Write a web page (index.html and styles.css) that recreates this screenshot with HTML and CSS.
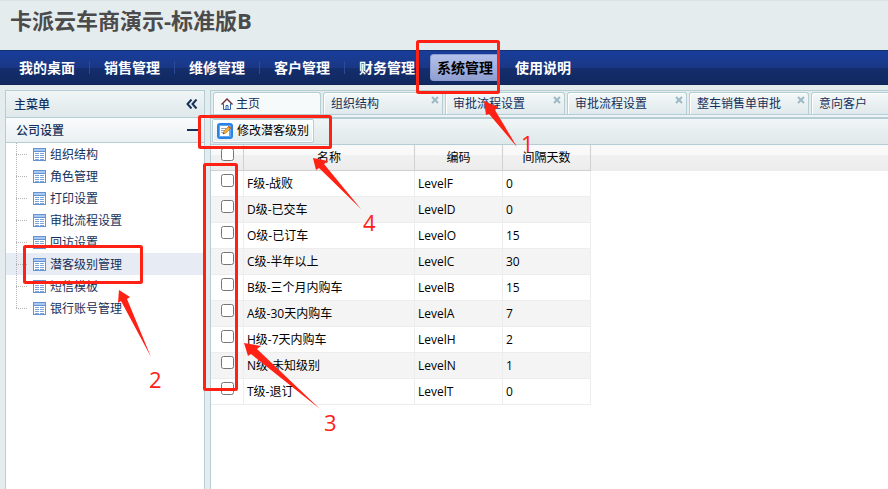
FILE: index.html
```html
<!DOCTYPE html>
<html lang="zh-CN">

<head>
    <meta charset="UTF-8">
    <meta name="viewport" content="width=device-width, initial-scale=1.0">
    <title>卡派云车商演示-标准版B</title>
    <link rel="stylesheet" href="styles.css">
</head>

<body>
    <!-- 公用图标 -->
    <svg class="defs" width="0" height="0" aria-hidden="true">
        <symbol id="icon-table" viewBox="0 0 13 13">
            <path d="M0 0h13v13H0z" fill="#6593cf" />
            <path d="M1 1h11v2H1z" fill="#a9c8f1" />
            <path d="M1 4h11v8H1z" fill="#fff" />
            <path d="M2 5.5h4M7 5.5h4M2 7.5h4M7 7.5h4M2 9.5h4M7 9.5h4M2 11.5h4M7 11.5h4" stroke="#7da4d8" />
        </symbol>
        <symbol id="icon-close" viewBox="0 0 8 8">
            <path d="M1 1l6 6M7 1l-6 6" stroke="#9dbac4" stroke-width="2" />
        </symbol>
    </svg>

    <header class="header">
        <h1>卡派云车商演示-标准版B</h1>
    </header>

    <nav class="nav">
        <a href="#">我的桌面</a>
        <i class="sep"></i>
        <a href="#">销售管理</a>
        <i class="sep"></i>
        <a href="#">维修管理</a>
        <i class="sep"></i>
        <a href="#">客户管理</a>
        <i class="sep"></i>
        <a href="#">财务管理</a>
        <a href="#" class="active">系统管理</a>
        <a href="#">使用说明</a>
    </nav>

    <div class="main">
        <aside class="side">
            <div class="side-title">
                <h2>主菜单</h2>
                <button type="button" class="fold" aria-label="收起">
                    <svg width="12" height="10" viewBox="0 0 12 10"><path d="M5.500 0.500L1.500 5l4 4.500M10.500 0.500L6.500 5l4 4.500" fill="none" stroke="#15305a" stroke-width="2" /></svg>
                </button>
            </div>
            <div class="side-group">
                <h3>公司设置</h3>
                <button type="button" class="fold" aria-label="折叠">
                    <svg width="12" height="10" viewBox="0 0 12 10"><path d="M1 5h11" stroke="#15305a" stroke-width="2" /></svg>
                </button>
            </div>
            <ul class="tree">
                <li><a href="#"><svg class="ico"><use href="#icon-table" /></svg>组织结构</a></li>
                <li><a href="#"><svg class="ico"><use href="#icon-table" /></svg>角色管理</a></li>
                <li><a href="#"><svg class="ico"><use href="#icon-table" /></svg>打印设置</a></li>
                <li><a href="#"><svg class="ico"><use href="#icon-table" /></svg>审批流程设置</a></li>
                <li><a href="#"><svg class="ico"><use href="#icon-table" /></svg>回访设置</a></li>
                <li class="on"><a href="#"><svg class="ico"><use href="#icon-table" /></svg>潜客级别管理</a></li>
                <li><a href="#"><svg class="ico"><use href="#icon-table" /></svg>短信模板</a></li>
                <li><a href="#"><svg class="ico"><use href="#icon-table" /></svg>银行账号管理</a></li>
            </ul>
        </aside>

        <section class="content">
            <div class="tabs">
                <div class="tab home">
                    <svg width="12" height="12" viewBox="0 0 12 12">
                        <path d="M2.500 5.500v6h7v-6" fill="#fff" stroke="#2c5fa8" />
                        <path d="M5 11.500v-4h2v4" fill="none" stroke="#2c5fa8" />
                        <path d="M0.500 6.500L6 1l5.500 5.500" fill="none" stroke="#6d2a35" stroke-width="1.400" />
                    </svg>
                    <a href="#">主页</a>
                </div>
                <div class="tab"><a href="#">组织结构</a><button type="button" aria-label="关闭"><svg><use href="#icon-close" /></svg></button></div>
                <div class="tab"><a href="#">审批流程设置</a><button type="button" aria-label="关闭"><svg><use href="#icon-close" /></svg></button></div>
                <div class="tab"><a href="#">审批流程设置</a><button type="button" aria-label="关闭"><svg><use href="#icon-close" /></svg></button></div>
                <div class="tab"><a href="#">整车销售单审批</a><button type="button" aria-label="关闭"><svg><use href="#icon-close" /></svg></button></div>
                <div class="tab"><a href="#">意向客户</a><button type="button" aria-label="关闭"><svg><use href="#icon-close" /></svg></button></div>
            </div>

            <div class="toolbar">
                <button type="button" class="edit">
                    <svg width="16" height="16" viewBox="0 0 16 16">
                        <rect x="1" y="1" width="14" height="14" rx="2" fill="#fff" stroke="#2b82e0" stroke-width="2" />
                        <path d="M2 2h12v12H2z" fill="#5aa7f3" />
                        <path d="M3 3h9v10H3z" fill="#fff" />
                        <path d="M4 5.500h5M4 7.500h4M4 9.500h2" stroke="#8fa6b8" />
                        <path d="M6 11l1-3 5-5 2 2-5 5z" fill="#f5ae38" stroke="#a86f1c" stroke-width="0.600" />
                        <path d="M11 4l1-1 2 2-1 1z" fill="#d8563a" />
                        <path d="M6 11l0.500-1.500 1 1z" fill="#333" />
                    </svg>
                    修改潜客级别
                </button>
            </div>

            <div class="grid">
                <table>
                    <thead>
                        <tr>
                            <th class="c-check"><input type="checkbox" aria-label="全选"></th>
                            <th class="c-name">名称</th>
                            <th class="c-code">编码</th>
                            <th class="c-days">间隔天数</th>
                        </tr>
                    </thead>
                    <tbody>
                        <tr><td class="c-check"><input type="checkbox" aria-label="LevelF"></td><td>F级-战败</td><td>LevelF</td><td>0</td></tr>
                        <tr><td class="c-check"><input type="checkbox" aria-label="LevelD"></td><td>D级-已交车</td><td>LevelD</td><td>0</td></tr>
                        <tr><td class="c-check"><input type="checkbox" aria-label="LevelO"></td><td>O级-已订车</td><td>LevelO</td><td>15</td></tr>
                        <tr><td class="c-check"><input type="checkbox" aria-label="LevelC"></td><td>C级-半年以上</td><td>LevelC</td><td>30</td></tr>
                        <tr><td class="c-check"><input type="checkbox" aria-label="LevelB"></td><td>B级-三个月内购车</td><td>LevelB</td><td>15</td></tr>
                        <tr><td class="c-check"><input type="checkbox" aria-label="LevelA"></td><td>A级-30天内购车</td><td>LevelA</td><td>7</td></tr>
                        <tr><td class="c-check"><input type="checkbox" aria-label="LevelH"></td><td>H级-7天内购车</td><td>LevelH</td><td>2</td></tr>
                        <tr><td class="c-check"><input type="checkbox" aria-label="LevelN"></td><td>N级-未知级别</td><td>LevelN</td><td>1</td></tr>
                        <tr><td class="c-check"><input type="checkbox" aria-label="LevelT"></td><td>T级-退订</td><td>LevelT</td><td>0</td></tr>
                    </tbody>
                </table>
            </div>
        </section>
    </div>

    <!-- 操作步骤标注 -->
    <svg class="marks" width="600" height="460" viewBox="0 0 600 460">
        <g class="frame">
            <rect x="417.500" y="41.500" width="81" height="51" rx="1" />
            <rect x="24.500" y="246.500" width="117" height="36" rx="1" />
            <rect x="204.500" y="164.500" width="32" height="225" rx="1" />
            <rect x="199.500" y="116.500" width="131" height="31" rx="1" />
        </g>
        <g class="arrow">
            <path d="M484 101L498 107L495 110L517 147L489 114L486 115Z" />
            <path d="M119 290L130 297L127 299L151 357L121 301L118 303Z" />
            <path d="M244 343L261 346L257 349L320 409L251 354L248 356Z" />
            <path d="M313 158L328 161L324 164L361 209L319 168L316 170Z" />
        </g>
        <text x="521" y="152">1</text>
        <text x="149" y="388">2</text>
        <text x="324" y="431">3</text>
        <text x="363" y="231">4</text>
    </svg>
</body>

</html>
```
FILE: styles.css
```css
* {
    margin: 0;
    padding: 0;
    box-sizing: border-box;
}

html,
body {
    height: 100%;
}

body {
    display: flex;
    flex-direction: column;
    background: #e5ecee;
    color: #000;
    font: 12px/16px "Open Sans", "Noto Sans CJK SC", sans-serif;
    overflow: hidden;
}

a {
    color: inherit;
    text-decoration: none;
}

button {
    border: 0;
    background: none;
    font: inherit;
    cursor: pointer;
}

svg {
    display: block;
}

.defs {
    position: absolute;
}

.header {
    height: 50px;
    padding: 4px 10px;
    border-top: 1px solid #dbe2e4;
}

.header h1 {
    font-size: 22px;
    line-height: 30px;
    color: #4b4b4b;
}

/* 导航 */
.nav {
    display: flex;
    align-items: center;
    height: 35px;
    padding-left: 8px;
    background: linear-gradient(#183e9b, #1a3785 50%, #142e6e 51%, #11295f);
    border-top: 1px solid #14306f;
    border-bottom: 1px solid #102556;
    font-size: 14px;
    font-weight: bold;
    color: #fff;
}

.nav a {
    height: 27px;
    margin: 0 4px;
    padding: 0 6px;
    border: 1px solid transparent;
    border-radius: 3px;
    line-height: 25px;
    white-space: nowrap;
}

.nav .active {
    color: #000;
    border-color: #8a9cd0;
    background: linear-gradient(#b3c1eb, #a2b0dd 50%, #8f9fd0);
}

.nav .sep {
    width: 1px;
    height: 13px;
    margin: 0 3px;
    background: #2b4a97;
}

/* 主体 */
.main {
    display: flex;
    flex: 1;
    gap: 5px;
    min-height: 0;
    padding: 5px 0 0 5px;
}

.side {
    flex: none;
    width: 200px;
    border: 1px solid #b5cdd4;
    border-bottom: 0;
    background: #fff;
    color: #15305a;
}

.side-title,
.side-group {
    display: flex;
    align-items: center;
    justify-content: space-between;
    padding: 0 6px 0 8px;
    border-bottom: 1px solid #b5cdd4;
}

.side-title {
    height: 27px;
    background: linear-gradient(#f0f5f6, #dfe8ea);
}

.side-group {
    height: 25px;
    padding-left: 10px;
    background: linear-gradient(#fafcfc, #eaf0f2);
}

.side h2,
.side h3 {
    font-size: 12px;
    font-weight: 500;
    line-height: 18px;
    padding-top: 1px;
}

.tree {
    list-style: none;
}

.tree li {
    display: flex;
    height: 22px;
    padding-left: 10px;
}

/* 树的虚线 */
.tree li::before {
    content: "";
    width: 11px;
    height: 11px;
    border-bottom: 1px dotted #b4b4b4;
    background: repeating-linear-gradient(#b4b4b4 0 1px, transparent 1px 2px) 0 0 / 1px 100% no-repeat;
}

.tree li:not(:last-child) {
    background: repeating-linear-gradient(#b4b4b4 0 1px, transparent 1px 2px) 10px 0 / 1px 22px no-repeat;
}

.tree li.on {
    background-color: #e6ebf4;
}

.tree a {
    display: flex;
    align-items: center;
    gap: 4px;
    height: 23px;
    padding-left: 6px;
}

.tree .ico {
    width: 13px;
    height: 13px;
}

.content {
    flex: 1;
    min-width: 0;
    border: 1px solid #b5cdd4;
    border-width: 1px 0 0 1px;
    background: #fff;
}

.tabs {
    display: flex;
    gap: 2px;
    height: 28px;
    padding: 1px 0 0 2px;
    overflow: hidden;
    border-bottom: 2px solid #b5cdd4;
    background: linear-gradient(#e5ecee 23px, #b5cdd4 23px 24px, #eef4f5 24px);
    color: #15305a;
}

.tab {
    display: flex;
    flex: none;
    justify-content: space-between;
    width: 120px;
    height: 22px;
    padding: 3px 3px 0 7px;
    border: 1px solid #b5cdd4;
    border-bottom: 0;
    border-radius: 3px 3px 0 0;
    background: linear-gradient(#f4f8f9, #e0e9eb);
    box-shadow: inset 1px 1px #fff;
}

.tab.home {
    justify-content: flex-start;
    gap: 3px;
    width: 108px;
    background: #f6fafb;
}

.tab.home svg {
    margin-top: 2px;
}

.tab button,
.tab button svg {
    width: 8px;
    height: 8px;
}

.toolbar {
    height: 26px;
    padding: 0 1px;
    background: linear-gradient(#f1f5f6, #dfe8ea);
    border-bottom: 1px solid #b5cdd4;
}

.edit {
    display: flex;
    align-items: center;
    gap: 4px;
    height: 24px;
    padding: 0 4px;
    border: 1px solid #b5cdd4;
    border-radius: 2px;
    background: linear-gradient(#fff, #e3edf0);
    box-shadow: inset 0 0 0 1px #fff;
}

/* 表格 */
.grid {
    background: linear-gradient(#f9f9f9 10px, #f1f1f1 10px, #ececec 26px, #fff 26px);
}

table {
    width: 380px;
    table-layout: fixed;
    border-collapse: separate;
    border-spacing: 0;
}

th,
td {
    height: 26px;
    border-right: 1px solid #ededed;
    border-bottom: 1px solid #ededed;
    white-space: nowrap;
}

th {
    border-color: #d0d0d0;
    font-weight: normal;
    text-align: center;
}

td {
    padding-left: 3px;
    background: #fff;
}

tbody tr:nth-child(even) td {
    background: #f4f4f4;
}

.c-check {
    width: 33px;
    padding: 0;
    text-align: center;
    vertical-align: top;
}

.c-check input {
    width: 13px;
    height: 13px;
    margin-top: 3px;
    vertical-align: top;
}

.c-name {
    width: 171px;
}

.c-code,
.c-days {
    width: 88px;
}

/* 标注 */
.marks {
    position: absolute;
    left: 0;
    top: 0;
    pointer-events: none;
}

.marks .frame {
    fill: none;
    stroke: #ff2114;
    stroke-width: 3;
}

.marks .arrow,
.marks text {
    fill: #ff2114;
}

.marks text {
    font-size: 22px;
}
```
